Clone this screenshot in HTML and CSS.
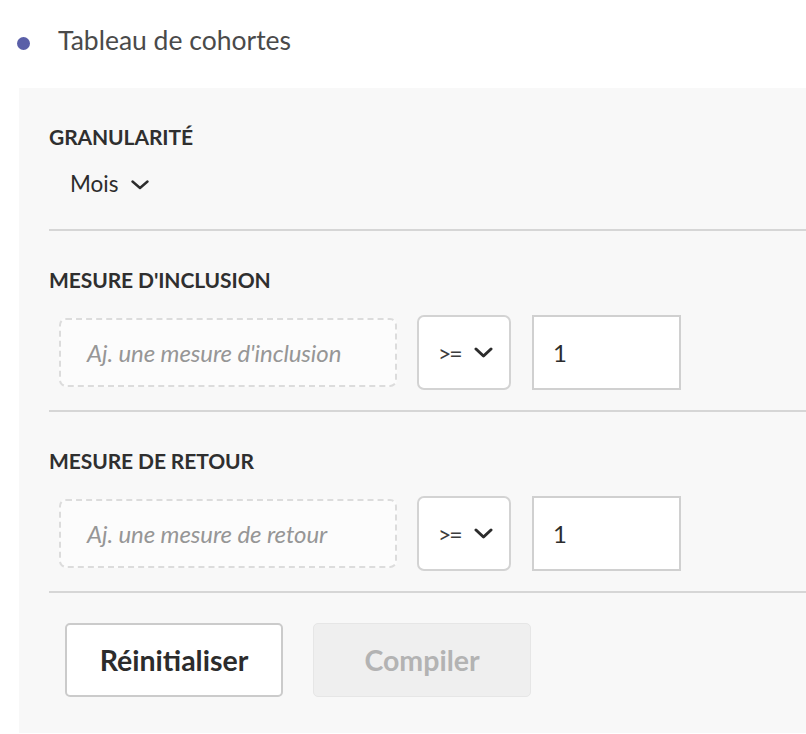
FILE: index.html
```html
<!DOCTYPE html>
<html lang="fr">
<head>
<meta charset="utf-8">
<title>Tableau de cohortes</title>
<link rel="stylesheet" href="styles.css">
</head>
<body>
<div class="header">
  <span class="bullet"></span>
  <span class="title">Tableau de cohortes</span>
</div>
<div class="panel">
  <section class="section first">
    <div class="label">GRANULARITÉ</div>
    <div class="gran">
      <span>Mois</span>
      <svg class="chev" width="18" height="10" viewBox="0 0 18 10"><polyline points="1.5,1.5 9,8 16.5,1.5" fill="none" stroke="#2c2c2c" stroke-width="2.4" stroke-linecap="round" stroke-linejoin="round"/></svg>
    </div>
  </section>
  <div class="divider"></div>
  <section class="section">
    <div class="label">MESURE D'INCLUSION</div>
    <div class="row">
      <div class="dropzone">Aj. une mesure d'inclusion</div>
      <div class="select"><span class="op">&gt;=</span><svg class="chev" width="19" height="11" viewBox="0 0 19 11"><polyline points="2,2 9.5,9 17,2" fill="none" stroke="#2c2c2c" stroke-width="3" stroke-linecap="round" stroke-linejoin="round"/></svg></div>
      <div class="number">1</div>
    </div>
  </section>
  <div class="divider"></div>
  <section class="section">
    <div class="label">MESURE DE RETOUR</div>
    <div class="row">
      <div class="dropzone">Aj. une mesure de retour</div>
      <div class="select"><span class="op">&gt;=</span><svg class="chev" width="19" height="11" viewBox="0 0 19 11"><polyline points="2,2 9.5,9 17,2" fill="none" stroke="#2c2c2c" stroke-width="3" stroke-linecap="round" stroke-linejoin="round"/></svg></div>
      <div class="number">1</div>
    </div>
  </section>
  <div class="divider"></div>
  <div class="buttons">
    <button class="btn primary">Réinitialiser</button>
    <button class="btn disabled">Compiler</button>
  </div>
</div>
</body>
</html>
```
FILE: styles.css
```css
html, body {
  margin: 0;
  padding: 0;
  background: #ffffff;
}
body {
  font-family: Lato, "Open Sans", sans-serif;
  color: #2c2c2c;
  width: 806px;
  height: 734px;
  overflow: hidden;
}
.header {
  display: flex;
  align-items: center;
  height: 32px;
  padding-top: 24px;
  margin-bottom: 32px;
}
.bullet {
  width: 13px;
  height: 13px;
  border-radius: 50%;
  background: #5a5fa8;
  margin-left: 17px;
  margin-right: 28px;
  margin-top: 6px;
}
.title {
  font-size: 26.5px;
  line-height: 32px;
  color: #4a4a4a;
}
.panel {
  margin-left: 19px;
  background: #f8f8f8;
  padding: 0 0 36px 30px;
}
.section {
  padding-top: 37px;
}
.label {
  font-size: 21px;
  line-height: 23px;
  font-weight: 700;
  color: #2f2f2f;
  letter-spacing: -0.1px;
}
.gran {
  display: flex;
  align-items: center;
  gap: 13px;
  margin-top: 23px;
  margin-bottom: 32px;
  padding-left: 21px;
  font-size: 22.5px;
  line-height: 26px;
}
.gran .chev {
  margin-top: 1px;
}
.divider {
  height: 2px;
  background: #d6d6d6;
}
.row {
  display: flex;
  align-items: center;
  margin-top: 24px;
  margin-bottom: 20px;
  padding-left: 10px;
  height: 75px;
}
.dropzone {
  box-sizing: border-box;
  width: 338px;
  height: 69px;
  border: 2px dashed #dcdcdc;
  border-radius: 7px;
  background: #fcfcfc;
  display: flex;
  align-items: center;
  padding-left: 26px;
  font-style: italic;
  font-size: 24px;
  color: #969696;
  letter-spacing: -0.1px;
}
.select {
  box-sizing: border-box;
  width: 94px;
  height: 75px;
  margin-left: 20px;
  border: 2px solid #d3d3d3;
  border-radius: 7px;
  background: #ffffff;
  display: flex;
  align-items: center;
  padding-left: 19px;
  gap: 13px;
  font-size: 23px;
  color: #3c3c3c;
}
.select .op {
  letter-spacing: -2px;
}
.number {
  box-sizing: border-box;
  width: 149px;
  height: 75px;
  margin-left: 21px;
  border: 2px solid #d0d0d0;
  background: #ffffff;
  display: flex;
  align-items: center;
  padding-left: 19px;
  font-size: 24px;
  color: #2c2c2c;
}
.buttons {
  display: flex;
  gap: 30px;
  padding-top: 30px;
  padding-left: 16px;
}
.btn {
  box-sizing: border-box;
  width: 218px;
  height: 74px;
  border-radius: 5px;
  font-family: Lato, "Open Sans", sans-serif;
  font-size: 28.5px;
  font-weight: 700;
  padding: 0;
}
.btn.primary {
  background: #ffffff;
  border: 2px solid #cbcbcb;
  color: #2c2c2c;
}
.btn.disabled {
  background: #efefef;
  border: 1px solid #e6e6e6;
  color: #b3b3b3;
}
```
